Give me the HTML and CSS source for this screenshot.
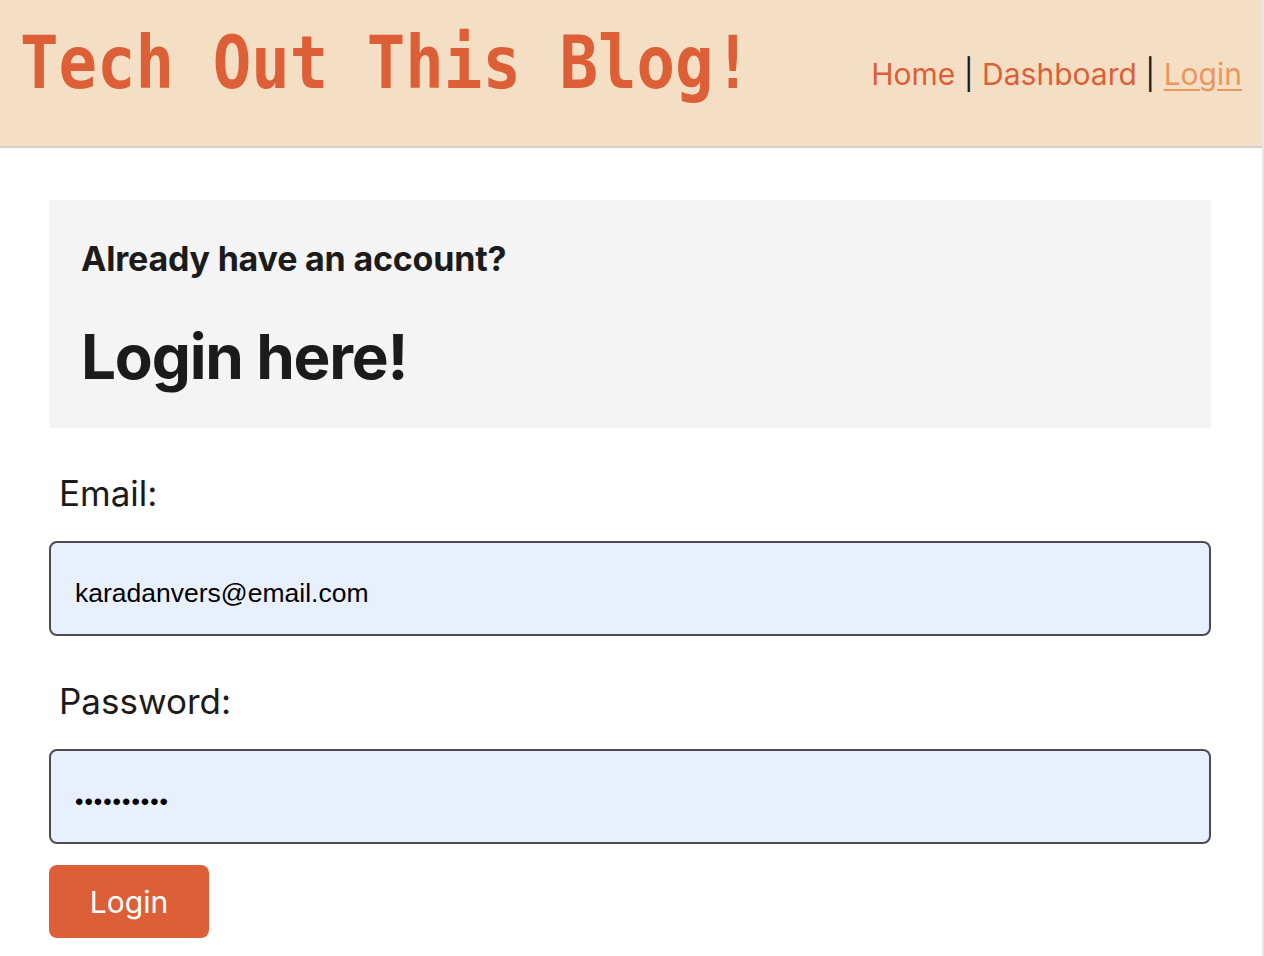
FILE: index.html
```html
<!DOCTYPE html>
<html lang="en">
<head>
<meta charset="utf-8">
<title>Tech Out This Blog!</title>
<link rel="stylesheet" href="styles.css">
</head>
<body>
<div class="page">
  <header class="site-header">
    <h1 class="brand"><span class="brand-text">Tech Out This Blog!</span></h1>
    <nav class="nav">
      <a class="nav-link" href="#">Home</a><span class="sep"> | </span><a class="nav-link" href="#">Dashboard</a><span class="sep"> | </span><a class="nav-link active" href="#">Login</a>
    </nav>
  </header>
  <main class="main">
    <section class="intro">
      <h2 class="intro-sub">Already have an account?</h2>
      <h2 class="intro-title">Login here!</h2>
    </section>
    <form class="login-form">
      <label class="field-label" for="email">Email:</label>
      <input class="field-input" id="email" type="email" value="karadanvers@email.com">
      <label class="field-label" for="password">Password:</label>
      <input class="field-input pw" id="password" type="password" value="supergirl1">
      <button class="btn" type="button">Login</button>
    </form>
  </main>
</div>
</body>
</html>
```
FILE: styles.css
```css
* { box-sizing: border-box; }
html, body { margin: 0; padding: 0; background: #fff; }
body { font-family: Inter, "Noto Sans", sans-serif; color: #1b1b1b; }

.page {
  width: 1264px;
  min-height: 956px;
  border-right: 2px solid #e6e6e6;
}

.site-header {
  height: 148px;
  background: #f4dfc4;
  border-bottom: 2px solid #d2d0cc;
  display: flex;
  align-items: center;
  justify-content: space-between;
  padding: 0 20px 0 20px;
}

.brand {
  margin: 0;
  font-weight: normal;
  padding-bottom: 20px;
}
.brand-text {
  display: inline-block;
  font-family: "DejaVu Sans Mono", "Liberation Mono", monospace;
  font-weight: bold;
  font-size: 64px;
  line-height: 1;
  color: #dc5f38;
  transform: scaleY(1.14);
  transform-origin: 50% 50%;
}

.nav {
  font-family: Inter, "Noto Sans", sans-serif;
  font-size: 30px;
  padding-top: 2px;
}
.nav-link { color: #dc5f38; text-decoration: none; }
.nav-link.active { color: #ea975e; text-decoration: underline; text-underline-offset: 4px; text-decoration-thickness: 2px; }
.sep { color: #1b1b1b; }

.main {
  width: 1162px;
  margin: 52px 0 0 49px;
}

.intro {
  background: #f4f4f4;
  padding: 39px 32px 30px;
  height: 228px;
}
.intro-sub {
  margin: 0;
  font-size: 34px;
  font-weight: 700;
  line-height: 1.2;
  letter-spacing: -0.2px;
}
.intro-title {
  margin: 40px 0 0;
  font-size: 62px;
  font-weight: 700;
  line-height: 1.2;
  letter-spacing: -1.2px;
}

.login-form { display: flex; flex-direction: column; }
.field-label {
  font-size: 35px;
  padding-left: 10px;
  margin: 44px 0 27px;
  line-height: 1.2;
}
.field-input {
  height: 95px;
  border: 2px solid #4b4b50;
  border-radius: 8px;
  background: #e8f0fe;
  padding: 10px 24px 0;
  font-family: "Liberation Sans", Arial, sans-serif;
  font-size: 26.5px;
  color: #000;
}
.field-input.pw { font-size: 24px; letter-spacing: 1px; }

.btn {
  align-self: flex-start;
  margin-top: 21px;
  width: 160px;
  height: 73px;
  border: none;
  border-radius: 8px;
  background: #dc5f38;
  color: #fff;
  font-family: Inter, "Noto Sans", sans-serif;
  font-size: 30px;
}
```
